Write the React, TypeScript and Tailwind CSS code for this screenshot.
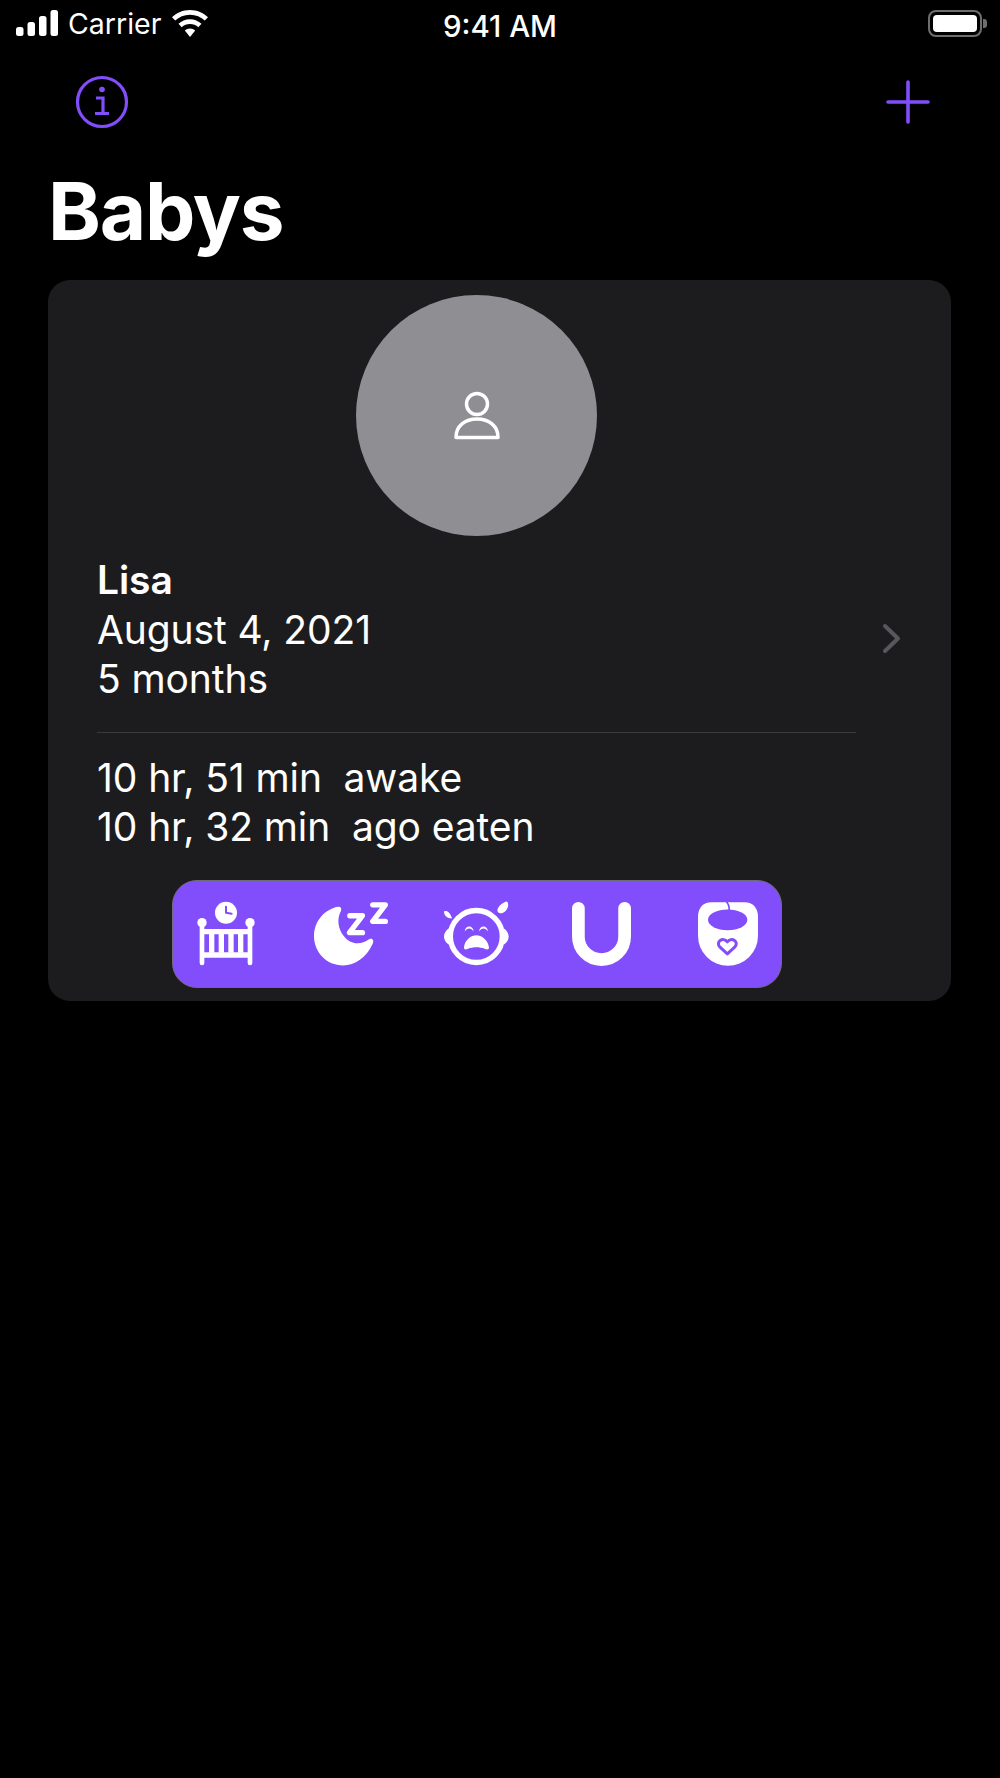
import React from "react";

const PURPLE = "#824efb";

function Crib() {
  return (
    <svg width="58" height="65" viewBox="110 95 174 195" className="block shrink-0">
      <circle cx="197" cy="130" r="33" fill="#fff" />
      <path d="M197 112V130L214 133" fill="none" stroke={PURPLE} strokeWidth="6" strokeLinecap="round" strokeLinejoin="round" />
      <circle cx="125" cy="160" r="14" fill="#fff" />
      <circle cx="269" cy="160" r="14" fill="#fff" />
      <path d="M125 160V281M269 160V281" stroke="#fff" strokeWidth="14" strokeLinecap="round" />
      <path d="M125 187H269M125 257H269" stroke="#fff" strokeWidth="16" />
      <path d="M154 190V250M183 190V250M212 190V250M241 190V250" stroke="#fff" strokeWidth="16" />
    </svg>
  );
}

function Moon() {
  return (
    <svg width="74" height="64" viewBox="462 97 223 192" className="block shrink-0">
      <path
        d="M534 111C544 109 547 119 541 128C518 178 572 250 628 209C639 204 644 214 638 224C620 264 585 288 550 288C500 288 462 248 462 200C462 155 493 119 534 111Z"
        fill="#fff"
      />
      <path d="M570 138H608L569 189H608" fill="none" stroke="#fff" strokeWidth="16" strokeLinecap="round" strokeLinejoin="round" />
      <path d="M639 105H677L639 155H677" fill="none" stroke="#fff" strokeWidth="16" strokeLinecap="round" strokeLinejoin="round" />
    </svg>
  );
}

function Cry() {
  return (
    <svg width="65" height="65" viewBox="103 95 195 194" className="block shrink-0">
      <circle cx="200" cy="201" r="78" fill="none" stroke="#fff" strokeWidth="16" />
      <path d="M118 176C98 190 98 212 118 226ZM282 176C302 190 302 212 282 226Z" fill="#fff" />
      <path d="M103 126C111 122 120 126 127 147C112 147 103 138 103 126Z" fill="#fff" />
      <path d="M292 96C299 104 296 124 277 131C266 133 260 125 265 116C270 106 282 98 292 96Z" fill="#fff" />
      <path d="M165 186C167 166 190 166 192 186C184 174 173 174 165 186Z" fill="#fff" />
      <path d="M208 186C210 166 233 166 235 186C227 174 216 174 208 186Z" fill="#fff" />
      <path d="M163 234C165 210 185 197 200 197C215 197 235 210 238 234C238 241 230 241 225 238C210 232 190 232 175 238C168 241 163 241 163 234Z" fill="#fff" />
    </svg>
  );
}

function Potty() {
  return (
    <svg width="59" height="64" viewBox="487 97 176 191" className="block shrink-0">
      <path d="M506 116V200A69 69 0 0 0 644 200V116" fill="none" stroke="#fff" strokeWidth="38" strokeLinecap="round" />
    </svg>
  );
}

function Bib() {
  return (
    <svg width="60" height="64" viewBox="865 97 180 191" className="block shrink-0">
      <path d="M905 97H1005C1030 97 1045 115 1045 140V198A90 90 0 0 1 865 198V140C865 115 880 97 905 97Z" fill="#fff" />
      <ellipse cx="954" cy="150" rx="59" ry="31" fill={PURPLE} />
      <path d="M950 95C958 104 960 112 958 122" fill="none" stroke={PURPLE} strokeWidth="5" />
      <path d="M953 252L931 232C916 216 940 200 953 216C966 200 990 216 975 232Z" fill="#fff" stroke={PURPLE} strokeWidth="9" strokeLinejoin="round" />
    </svg>
  );
}

export default function App() {
  return (
    <div className="w-[1000px] h-[1778px] bg-black text-white font-[Inter,sans-serif] flex flex-col overflow-hidden">
      {/* status bar */}
      <div className="relative h-[50px] pl-4 pr-[13px] flex items-center">
        <svg width="42" height="26" viewBox="0 0 42 26" className="block mb-1">
          <rect x="0" y="17" width="7.5" height="9" rx="2.5" fill="#fff" />
          <rect x="11.5" y="12" width="7.5" height="14" rx="2.5" fill="#fff" />
          <rect x="23" y="6" width="7.5" height="20" rx="2.5" fill="#fff" />
          <rect x="34.5" y="0" width="7.5" height="26" rx="2.5" fill="#fff" />
        </svg>
        <span className="ml-[10px] text-[28.5px] leading-none mb-[1px] text-white">Carrier</span>
        <svg width="36" height="27" viewBox="0 0 36 27" className="block ml-[11px] mb-1">
          <path d="M18 0C25 0 31.500 2.800 36 7.200L32.800 10.600C29 6.900 23.800 4.700 18 4.700C12.200 4.700 7 6.900 3.200 10.600L0 7.200C4.500 2.800 11 0 18 0Z" fill="#fff" />
          <path d="M18 9.200C22.500 9.200 26.500 11 29.500 13.800L26.300 17.200C24.100 15.200 21.200 14 18 14C14.800 14 11.900 15.200 9.700 17.200L6.500 13.800C9.500 11 13.500 9.200 18 9.200Z" fill="#fff" />
          <path d="M18 18.500C20 18.500 21.800 19.200 23.200 20.500L18 27L12.800 20.500C14.200 19.200 16 18.500 18 18.500Z" fill="#fff" />
        </svg>
        <span className="absolute left-0 right-0 top-[11px] text-center text-[29.5px] leading-[30px] font-medium">9:41 AM</span>
        <div className="ml-auto flex items-center mb-1">
          <div className="w-[54px] h-[27px] rounded-[8px] border-2 border-[#6e6e6e] p-[3px]">
            <div className="w-full h-full rounded-[4px] bg-white" />
          </div>
          <div className="w-[4px] h-[9px] ml-[1px] rounded-r-[3px] bg-[#6e6e6e]" />
        </div>
      </div>

      {/* nav */}
      <div className="h-[104px] pl-[75px] pr-[70px] flex items-center justify-between">
        <svg width="54" height="54" viewBox="0 0 54 54" className="block">
          <circle cx="27" cy="27" r="24.500" fill="none" stroke={PURPLE} strokeWidth="3.200" />
          <circle cx="27" cy="14.500" r="2.800" fill={PURPLE} />
          <path d="M21 23H28V38M20 38.500H34" fill="none" stroke={PURPLE} strokeWidth="3.200" />
        </svg>
        <svg width="44" height="44" viewBox="0 0 44 44" className="block">
          <path d="M22 2V42M2 22H42" stroke={PURPLE} strokeWidth="3.600" strokeLinecap="round" />
        </svg>
      </div>

      {/* title */}
      <h1 className="pl-[48px] pt-[18px] h-[126px] text-[80px] leading-[78px] font-bold tracking-[-1.2px]">Babys</h1>

      {/* card */}
      <div className="ml-[48px] w-[903px] h-[721px] rounded-[22px] bg-[#1c1c1e] pt-[15px] flex flex-col">
        <div className="w-[241px] h-[241px] rounded-full bg-[#8e8e93] ml-[308px] flex items-center justify-center">
          <svg width="48" height="50" viewBox="0 0 48 50" className="block">
            <circle cx="24" cy="13" r="10.500" fill="none" stroke="#fff" strokeWidth="3.500" />
            <path d="M3 46.500C3 35 12 28 24 28C36 28 45 35 45 46.500Z" fill="none" stroke="#fff" strokeWidth="3.500" strokeLinejoin="round" />
          </svg>
        </div>

        <div className="mt-[19px] flex items-center pl-[49px] pr-[50px]">
          <div className="flex-1 text-[39px] leading-[49.5px] tracking-[-0.1px]">
            <div className="font-semibold">Lisa</div>
            <div>August 4, 2021</div>
            <div>5 months</div>
          </div>
          <svg width="19" height="31" viewBox="0 0 19 31" className="block mt-[19px]">
            <path d="M3 3L16 15.500L3 28" fill="none" stroke="#58585c" strokeWidth="4" strokeLinecap="round" strokeLinejoin="round" />
          </svg>
        </div>

        <div className="mt-[28px] ml-[49px] w-[759px] h-px bg-[#3a3a3c]" />

        <div className="mt-[20px] pl-[49px] text-[39px] leading-[49.5px] tracking-[-0.1px] whitespace-pre">
          <div>10 hr, 51 min  awake</div>
          <div>10 hr, 32 min  ago eaten</div>
        </div>

        <div className="mt-[28px] ml-[124px] w-[610px] h-[108px] rounded-[25px] bg-[#824efb] border border-[#6f6a78] flex items-center pl-[24px]">
          <Crib />
          <div className="ml-[59px]"><Moon /></div>
          <div className="ml-[56px]"><Cry /></div>
          <div className="ml-[63px]"><Potty /></div>
          <div className="ml-[67px]"><Bib /></div>
        </div>
      </div>
    </div>
  );
}
